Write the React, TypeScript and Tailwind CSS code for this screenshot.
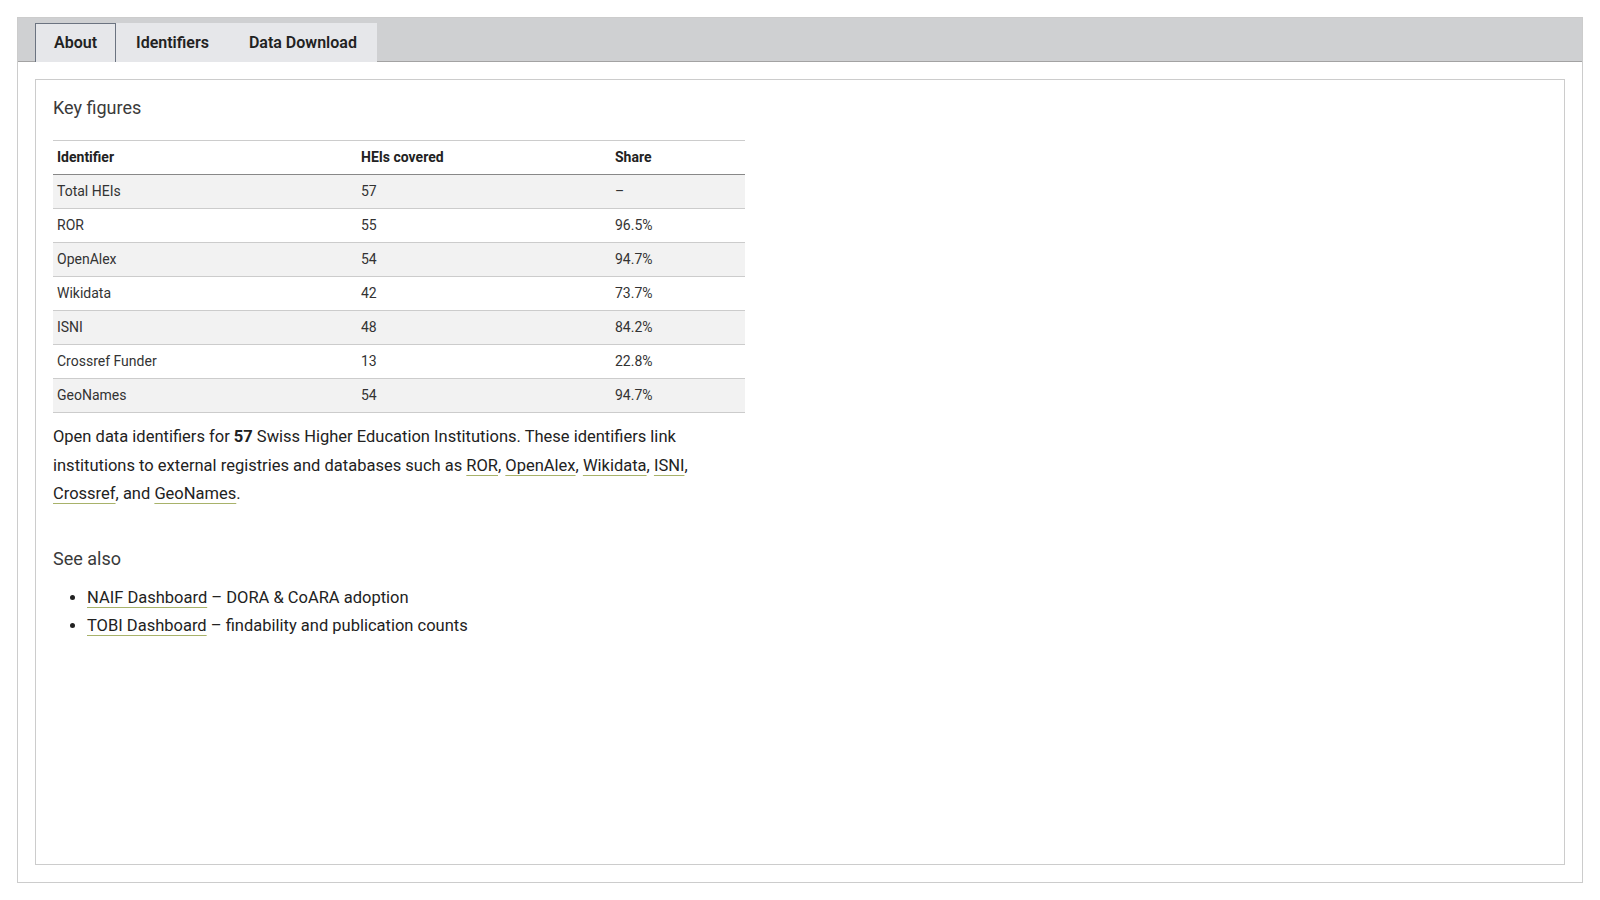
const rows = [
  { id: 'Total HEIs', count: '57', share: '–' },
  { id: 'ROR', count: '55', share: '96.5%' },
  { id: 'OpenAlex', count: '54', share: '94.7%' },
  { id: 'Wikidata', count: '42', share: '73.7%' },
  { id: 'ISNI', count: '48', share: '84.2%' },
  { id: 'Crossref Funder', count: '13', share: '22.8%' },
  { id: 'GeoNames', count: '54', share: '94.7%' },
];

const tabs = ['About', 'Identifiers', 'Data Download'];

function A({ children }: { children: React.ReactNode }) {
  return (
    <a href="#" className="underline decoration-[#a8b26a] decoration-1 underline-offset-[4px] text-[#222]">
      {children}
    </a>
  );
}

export default function App() {
  return (
    <div className="bg-white p-[17px] font-['Roboto',sans-serif] text-[#222]">
      <div className="h-[866px] border border-[#cccccc] flex flex-col">
        {/* Tab bar */}
        <div className="h-[44px] bg-[#cfd0d2] border-b border-[#a3a3a3] flex items-end pl-[17px]">
          {tabs.map((t, i) => (
            <button
              key={t}
              className={
                i === 0
                  ? 'h-[39px] -mb-px px-[18px] bg-[#e6e7ea] border border-[#6b7380] border-b-0 text-[16px] font-semibold text-[#222]'
                  : 'h-[39px] -mb-px px-[20px] bg-[#e6e7ea] text-[16px] font-semibold text-[#222]'
              }
            >
              {t}
            </button>
          ))}
        </div>

        {/* Panel */}
        <div className="flex-1 p-[17px]">
          <div className="h-full border border-[#cccccc] px-[17px] pt-[16px]">
            <h2 className="text-[18px] text-[#3a3a3a] leading-[24px]">Key figures</h2>

            <table className="mt-[20px] w-[692px] border-collapse text-[14px] border-t border-[#cccccc]">
              <thead>
                <tr className="border-b border-[#888]">
                  <th className="w-[304px] text-left font-bold px-[4px] h-[34px]">Identifier</th>
                  <th className="w-[254px] text-left font-bold px-[4px] h-[34px]">HEIs covered</th>
                  <th className="text-left font-bold px-[4px] h-[34px]">Share</th>
                </tr>
              </thead>
              <tbody>
                {rows.map((r, i) => (
                  <tr key={r.id} className={`border-b border-[#cccccc] ${i % 2 === 0 ? 'bg-[#f2f2f2]' : 'bg-white'}`}>
                    <td className="px-[4px] h-[34px] text-[#333]">{r.id}</td>
                    <td className="px-[4px] h-[34px] text-[#333]">{r.count}</td>
                    <td className="px-[4px] h-[34px] text-[#333]">{r.share}</td>
                  </tr>
                ))}
              </tbody>
            </table>

            <p className="mt-[10px] w-[650px] text-[16.5px] leading-[28.6px]">
              Open data identifiers for <b>57</b> Swiss Higher Education Institutions. These identifiers link
              institutions to external registries and databases such as <A>ROR</A>, <A>OpenAlex</A>,{' '}
              <A>Wikidata</A>, <A>ISNI</A>, <A>Crossref</A>, and <A>GeoNames</A>.
            </p>

            <h2 className="mt-[38px] text-[18px] text-[#3a3a3a] leading-[24px]">See also</h2>
            <ul className="mt-[13px] list-disc pl-[34px] text-[16.5px] leading-[28px]">
              <li>
                <A>NAIF Dashboard</A> – DORA &amp; CoARA adoption
              </li>
              <li>
                <A>TOBI Dashboard</A> – findability and publication counts
              </li>
            </ul>
          </div>
        </div>
      </div>
    </div>
  );
}
